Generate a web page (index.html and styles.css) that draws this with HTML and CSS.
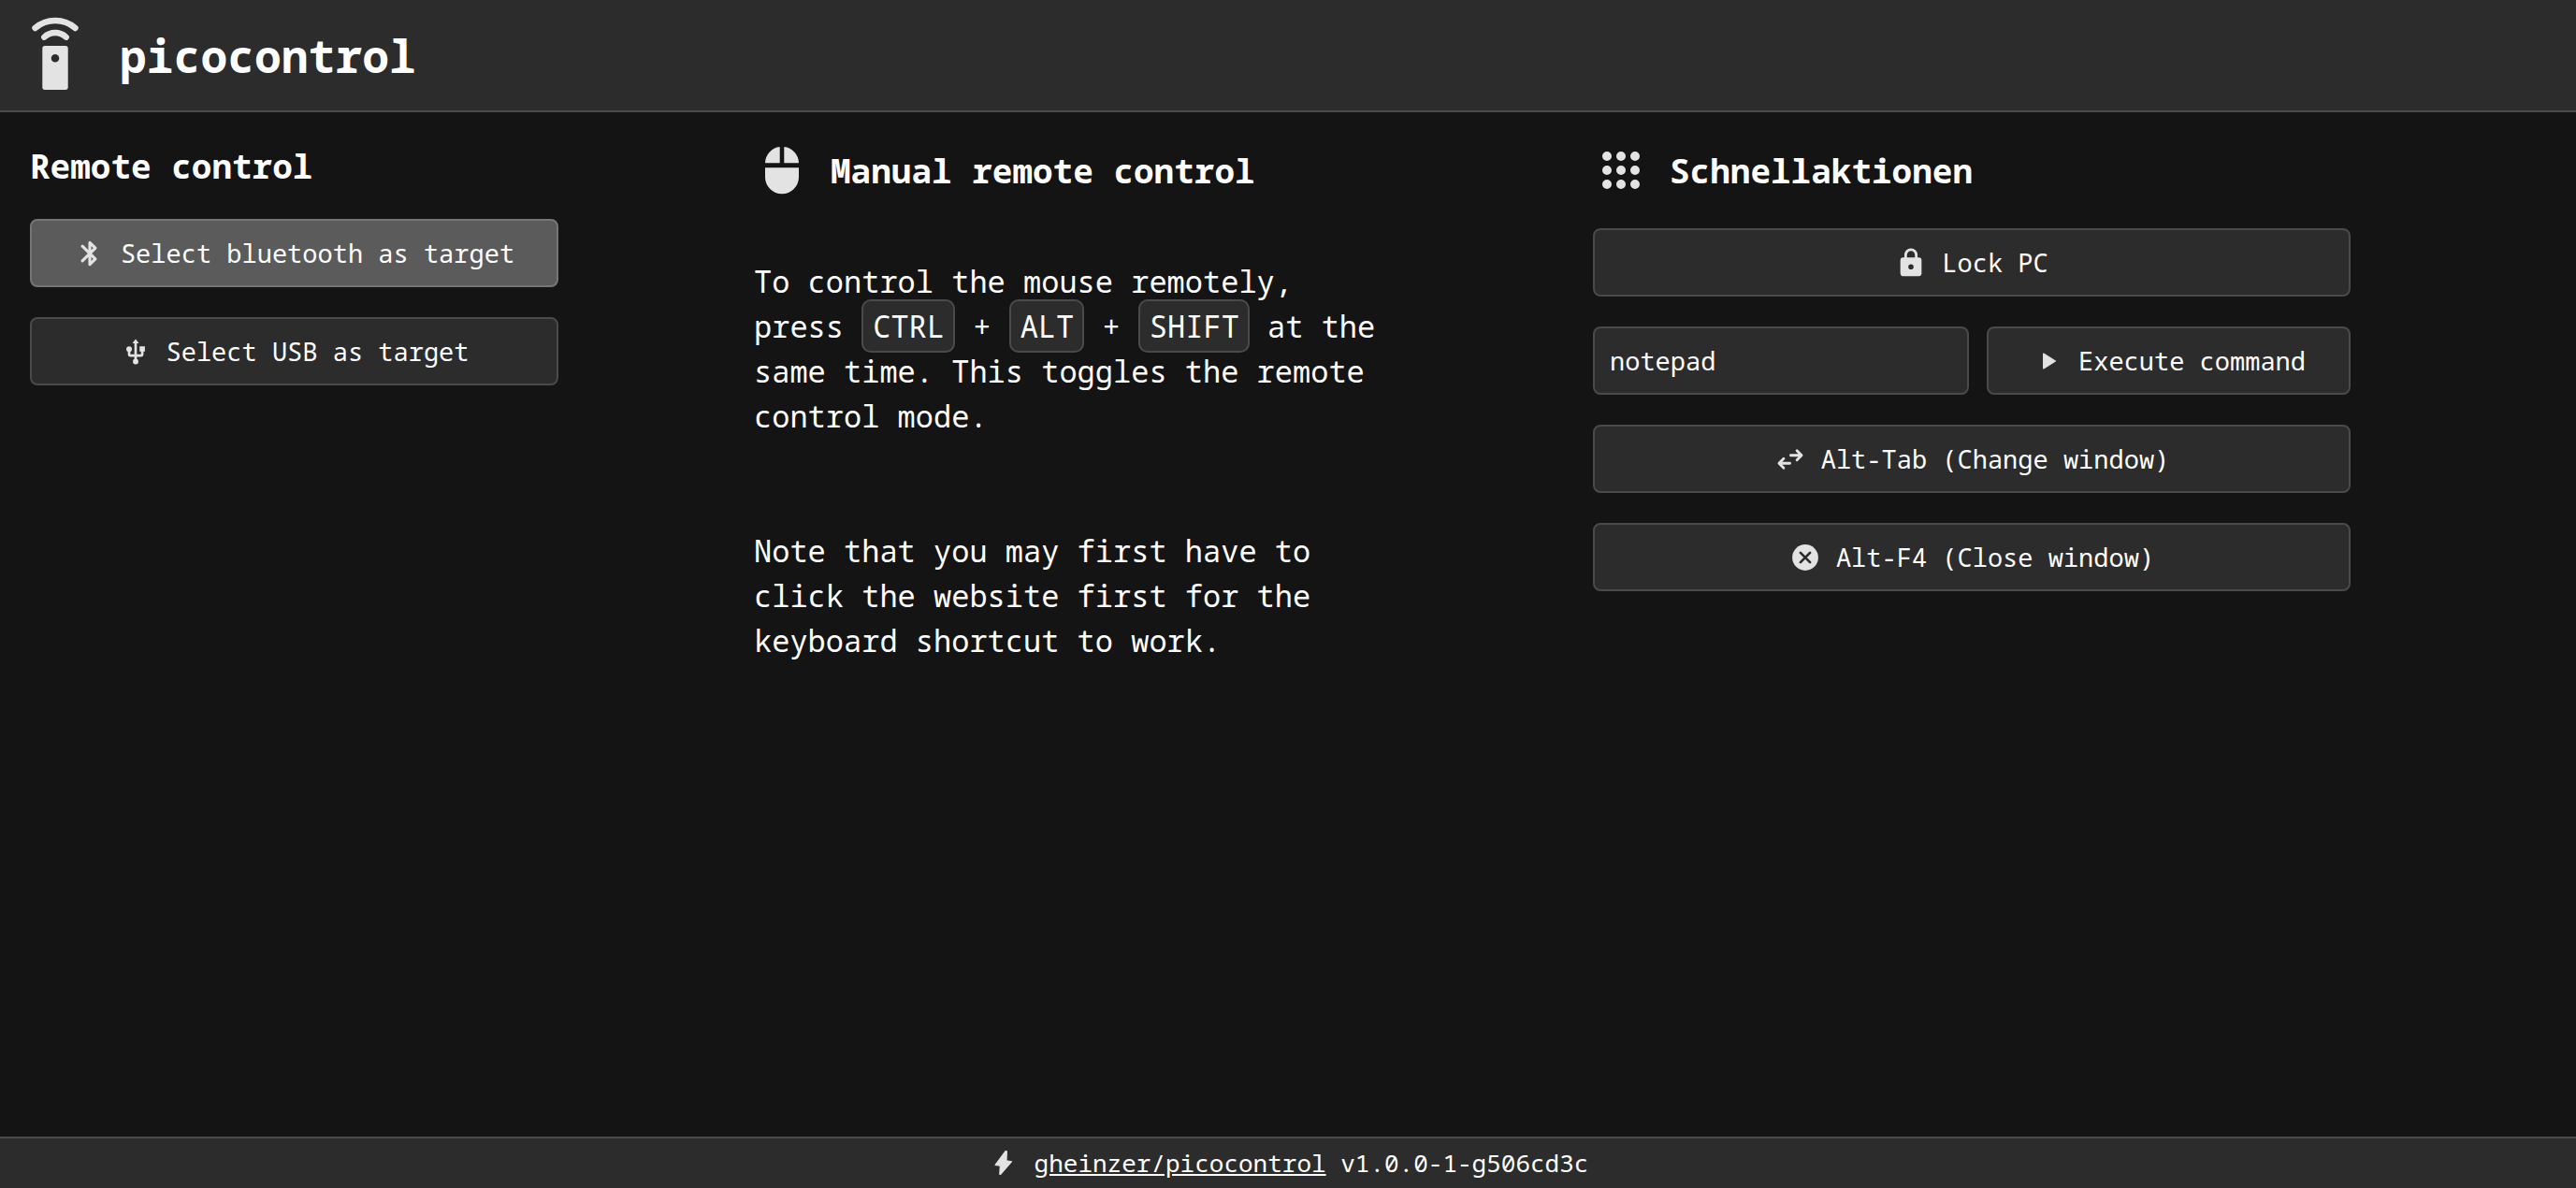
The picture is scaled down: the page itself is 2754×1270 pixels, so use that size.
FILE: index.html
```html
<!DOCTYPE html>
<html lang="en">
<head>
<meta charset="utf-8">
<title>picocontrol</title>
<link rel="stylesheet" href="styles.css">
</head>
<body>
<header class="topbar">
  <svg class="logo" viewBox="0 -4 78 86" aria-hidden="true"><path fill-rule="evenodd" d="M28 29h22a2.700 2.700 0 0 1 2.700 2.700v41.600a2.700 2.700 0 0 1-2.700 2.700H28a2.700 2.700 0 0 1-2.700-2.700V31.700A2.700 2.700 0 0 1 28 29Zm11 9a4.300 4.300 0 1 0 0 8.600a4.300 4.300 0 0 0 0-8.600Z"/><path class="line" stroke-width="6.400" d="M17.500 10A33 33 0 0 1 60.500 10M27.300 19.700A17 17 0 0 1 50.700 19.700"/></svg>
  <h1>picocontrol</h1>
</header>
<main class="columns">
  <section>
    <h2>Remote control</h2>
    <div class="stack">
      <button class="btn active" type="button"><svg class="icon" viewBox="0 0 24 24" aria-hidden="true"><path class="line" stroke-width="2.200" d="M6.400 6.400L16.200 16.100L12 20.200V3.800L16.200 7.900L6.400 17.600"/></svg><span>Select bluetooth as target</span></button>
      <button class="btn" type="button"><svg class="icon" viewBox="0 0 24 24" aria-hidden="true"><path d="M15 8h4v3.800h-4zM12 2.400l2.500 3.300H9.500z"/><circle cx="7.100" cy="10" r="2.100"/><circle cx="12" cy="19.400" r="2.100"/><path class="line" stroke-width="1.900" d="M12 4.500V19M7.100 10V13.900a1 1 0 0 0 1 1H16a1 1 0 0 0 1-1V10"/></svg><span>Select USB as target</span></button>
    </div>
  </section>
  <section>
    <div class="heading"><svg class="icon-large" viewBox="0 0 60 60" aria-hidden="true"><path d="M27.700 5.100V22.300H12A17.500 17.500 0 0 1 27.700 5.100M32.300 5.100V22.300H48A17.500 17.500 0 0 0 32.300 5.100M12 27.200H48V37.300A18 18 0 0 1 12 37.300Z"/></svg><h2>Manual remote control</h2></div>
    <div class="prose">
      <p>To control the mouse remotely, press <kbd>CTRL</kbd> + <kbd>ALT</kbd> + <kbd>SHIFT</kbd> at the same time. This toggles the remote control mode.</p>
      <p>Note that you may first have to click the website first for the keyboard shortcut to work.</p>
    </div>
  </section>
  <section>
    <div class="heading"><svg class="icon-large" viewBox="0 0 24 24" aria-hidden="true"><path d="M12 16a2 2 0 1 1 0 4 2 2 0 0 1 0-4m0-6a2 2 0 1 1 0 4 2 2 0 0 1 0-4m0-6a2 2 0 1 1 0 4 2 2 0 0 1 0-4M6 16a2 2 0 1 1 0 4 2 2 0 0 1 0-4m0-6a2 2 0 1 1 0 4 2 2 0 0 1 0-4m0-6a2 2 0 1 1 0 4 2 2 0 0 1 0-4m12 12a2 2 0 1 1 0 4 2 2 0 0 1 0-4m0-6a2 2 0 1 1 0 4 2 2 0 0 1 0-4m0-6a2 2 0 1 1 0 4 2 2 0 0 1 0-4"/></svg><h2>Schnellaktionen</h2></div>
    <div class="stack">
      <button class="btn" type="button"><svg class="icon" viewBox="0 0 24 24" aria-hidden="true"><path d="M12 17a2 2 0 0 0 0-4 2 2 0 0 0 0 4m6-9a2 2 0 0 1 2 2v10a2 2 0 0 1-2 2H6a2 2 0 0 1-2-2V10a2 2 0 0 1 2-2h1V6a5 5 0 0 1 10 0v2zm-6-5a3 3 0 0 0-3 3v2h6V6a3 3 0 0 0-3-3"/></svg><span>Lock PC</span></button>
      <form class="command">
        <input class="field" type="text" value="notepad" aria-label="Command">
        <button class="btn" type="button"><svg class="icon" viewBox="0 0 24 24" aria-hidden="true"><path class="soft" stroke-width="1" d="M9 6.500V17.500L17.900 12Z"/></svg><span>Execute command</span></button>
      </form>
      <button class="btn" type="button"><svg class="icon" viewBox="0 0 24 24" aria-hidden="true"><path class="line" stroke-width="2" d="M12.300 9H20.400M17 5.500L20.500 9L17 12.500M11.700 15H3.600M7 11.500L3.500 15L7 18.500"/></svg><span>Alt-Tab (Change window)</span></button>
      <button class="btn" type="button"><svg class="icon" viewBox="0 0 24 24" aria-hidden="true"><circle cx="12" cy="12" r="9.800"/><path class="cutout" stroke-width="1.900" d="M8.400 8.400L15.600 15.600M15.600 8.400L8.400 15.600"/></svg><span>Alt-F4 (Close window)</span></button>
    </div>
  </section>
</main>
<footer class="footer">
  <svg class="icon" viewBox="0 0 24 24" aria-hidden="true"><path class="soft" stroke-width=".8" d="M13.400 3.200L14.400 3.400L14.100 10.400L18.100 11.100L9.700 20.800L9 20.600L9.400 14.200L5.700 13.700Z"/></svg>
  <span><a href="#">gheinzer/picocontrol</a> v1.0.0-1-g506cd3c</span>
</footer>
</body>
</html>
```
FILE: styles.css
```css
* { box-sizing: border-box; }

body {
  margin: 0;
  min-height: 100vh;
  display: flex;
  flex-direction: column;
  background: #141414;
  color: #fff;
  font-family: "Noto Sans Mono", "DejaVu Sans Mono", monospace;
  font-size: 32px;
  line-height: 48px;
}

svg { flex: none; fill: #e3e3e3; }
.line { fill: none; stroke: #e3e3e3; stroke-linecap: round; stroke-linejoin: round; }
.soft { stroke: #e3e3e3; stroke-linejoin: round; }
.cutout { fill: none; stroke: #2c2c2c; stroke-linecap: round; }

h1, h2, p { margin: 0; }
h1, h2 { padding-top: 2px; }
h1 { font-size: 48px; line-height: 72px; }
h2 { font-size: 36px; line-height: 48px; }

.topbar {
  display: flex;
  align-items: center;
  gap: 30px;
  height: 120px;
  padding: 0 20px;
  background: #2c2c2c;
  border-bottom: 2px solid #4a4a4a;
}
.logo { width: 78px; height: 86px; }

.columns {
  flex: 1;
  display: grid;
  grid-template-columns: 565fr 688fr 810fr;
  column-gap: 209px;
  align-items: start;
  padding: 32px 241px 32px 32px;
}

.heading { display: flex; align-items: center; gap: 22px; }
.icon-large { width: 60px; height: 60px; }
.icon { width: 34px; height: 34px; }

.stack { display: flex; flex-direction: column; gap: 32px; margin-top: 32px; }

.prose { display: flex; flex-direction: column; gap: 96px; margin-top: 65px; }

kbd {
  padding: 5px 9px 5px 10px;
  border: 2px solid #4a4a4a;
  border-radius: 10px;
  background: #2c2c2c;
  font-family: inherit;
  font-size: 32px;
}

.btn, .field {
  height: 73px;
  border: 2px solid #4a4a4a;
  border-radius: 8px;
  background: #2c2c2c;
  color: #fff;
  font-family: inherit;
  font-size: 27px;
}
.btn {
  display: flex;
  align-items: center;
  justify-content: center;
  gap: 16px;
  padding: 0 16px;
}
.active { background: #5b5b5b; border-color: #757575; }
.field { min-width: 0; padding: 0 16px; }
.command { display: grid; grid-template-columns: 402fr 389fr; gap: 19px; }

.footer {
  display: flex;
  align-items: center;
  justify-content: center;
  gap: 16px;
  height: 55px;
  padding-bottom: 2px;
  background: #2c2c2c;
  border-top: 2px solid #4a4a4a;
  font-size: 26px;
}
.footer a { color: inherit; }
```
